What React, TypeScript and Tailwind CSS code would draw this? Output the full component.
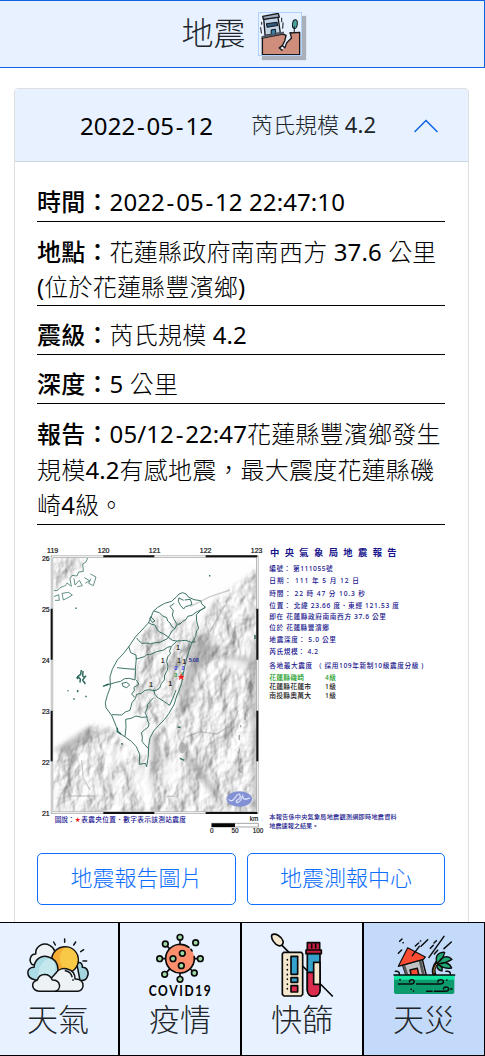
import type { ReactNode } from "react";

const Hy = () => <span className="px-[1.7px]">-</span>;

function Num({ children }: { children: ReactNode }) {
  return <span className="font-normal tracking-[0.1px]">{children}</span>;
}

function Row({ label, className, children }: { label: string; className: string; children: ReactNode }) {
  return (
    <div className={`border-b border-black whitespace-nowrap ${className}`}>
      <span className="font-medium">{label}：</span>
      {children}
    </div>
  );
}

function QuakeIcon() {
  return (
    <svg viewBox="28 25 124 124" className="size-full" stroke="#16181d" strokeWidth="4" strokeLinejoin="round" strokeLinecap="round" fill="none">
      <path d="M37 99 L98 87 L108 90 L104 107 L97 123 L88 136 L104 128 L109 114 L124 99 L120 83 L148 80 V148 H37Z" fill="#cf8d7b" stroke="none" />
      <path d="M37 99 L98 87 L108 91 L104 107 L97 121 L104 128 L110 113 L124 99 L120 83" fill="#e8f0fb" />
      <path d="M38 98 V148 H148 V82 L120 84 M97 121 L88 128 L96 135" />
      <path d="M46 91 L42 43 L84 37 L91 84Z" fill="#c3d3e6" />
      <path d="M39 35 L85 26 L88 37 L41 44Z" fill="#9fa9b8" />
      <path d="M50 57 L81 52 L83 62 L52 67Z" fill="#315b80" strokeWidth="3" />
      <path d="M64 88 V75 L76 73 L78 85" fill="#3a83a8" strokeWidth="3" />
      <path d="M38 96 L99 83" strokeWidth="6" stroke="#555b66" />
      <ellipse cx="134" cy="58" rx="7" ry="13" fill="#4ba49e" transform="rotate(8 134 58)" strokeWidth="3" />
      <path d="M132 65 V81 M33 68 L35 84 M95 40 V51 M99 54 L98 70 M36 52 V58" strokeWidth="3" />
    </svg>
  );
}

function WeatherIcon() {
  return (
    <svg viewBox="78 40 192 192" className="size-16" stroke="#101214" strokeWidth="4.5" strokeLinecap="round" strokeLinejoin="round">
      <path d="M194 58 V68 M161 67 L166 76 M227 67 L221 76 M251 90 L242 96 M249 124 H260" fill="none" />
      <path d="M97 135 C84 122 92 103 107 103 C106 79 130 67 149 77 C157 81 162 86 164 94 V130Z" fill="#edf3f4" />
      <path d="M230 130 C244 124 248 135 247 143 C262 142 269 160 261 173 C258 180 249 183 240 182Z" fill="#a4d5df" />
      <circle cx="195" cy="121" r="40" fill="#f6ad35" />
      <path d="M195 84 C168 106 180 143 204 158 C238 147 244 98 207 84Z" fill="#f8c947" stroke="none" />
      <path d="M104 180 C78 175 76 143 102 143 C104 118 125 104 146 112 C166 118 174 132 174 150 L168 181Z" fill="#acdce5" />
      <path d="M104 175 C124 172 106 150 131 126 C137 120 143 116 150 118 C174 130 165 151 160 170Z" fill="#c4e8ed" stroke="none" />
      <path d="M120 215 H234 C252 211 255 188 237 180 C231 177 226 178 225 178 C226 145 182 137 168 160 L154 175Z" fill="#edf3f4" />
      <path d="M118 215 C94 212 91 188 112 181 C119 160 147 158 157 181 C183 181 186 211 164 215Z" fill="#edf3f4" />
      <path d="M196 153 C207 155 214 161 216 171 M219 180 V182" fill="none" />
    </svg>
  );
}

const VIRUS_ARMS = [
  [540, 53], [496, 73], [587, 69], [479, 117], [601, 117], [494, 164], [583, 160], [540, 179],
];

function CovidIcon() {
  return (
    <svg viewBox="444 40 192 192" className="size-16 overflow-visible" strokeLinecap="round">
      <g stroke="#0b0b0b" strokeWidth="5">
        <path d="M540 53 V77 M496 73 L513 92 M479 117 H498 M582 117 H600 M494 164 L513 144 M583 160 L568 145 M540 160 V178" />
        <circle cx="540" cy="117" r="43" fill="#ff8e6d" strokeDasharray="236 8 6 22" transform="rotate(-8 540 117)" />
        {VIRUS_ARMS.map(([x, y]) => (
          <circle key={`${x}-${y}`} cx={x} cy={y} r="8.5" fill="#a2dba6" />
        ))}
        <circle cx="547" cy="101" r="8.5" fill="#a2dba6" />
        <circle cx="519" cy="117" r="8.5" fill="#a2dba6" />
        <circle cx="544" cy="138" r="8.5" fill="#a2dba6" />
      </g>
      <text transform="translate(446 229) scale(0.84 1)" x="0" y="0" textLength="222" fontSize="43" className="font-['Lato'] font-bold">COVID19</text>
    </svg>
  );
}

function TestIcon() {
  return (
    <svg viewBox="84 40 192 192" className="size-16" stroke="#090909" strokeWidth="5" strokeLinecap="round" strokeLinejoin="round">
      <path d="M120 77 L271 229" fill="none" />
      <path d="M90 45 C101 39 119 51 123 64 C125 73 119 80 110 78 C98 75 85 56 90 45Z" fill="#f5e8cf" />
      <path d="M125 98 H178 L182 103 V224 L177 229 H126 L121 224 V103Z" fill="#f5e8cf" />
      <rect x="147" y="110" width="20" height="54" fill="#36a3cf" />
      <rect x="147" y="174" width="20" height="14" fill="#36a3cf" />
      <rect x="147" y="198" width="20" height="19" fill="#dc2c50" />
      <path d="M136 120 V121 M136 135 V136 M136 150 V151 M136 164 V165 M136 178 V179 M136 193 V194 M136 207 V208" />
      <path d="M196 101 V212 C197 236 233 236 234 212 V101Z" fill="#36a3cf" />
      <path d="M196 158 H234 V212 C233 236 197 236 196 212Z" fill="#dc2c50" />
      <path d="M215 128 H234 V194 H215Z" fill="#f5e8cf" />
      <path d="M196 69 H233 V91 H196Z M192 91 H238 V102 H192Z" fill="#c92042" />
      <path d="M209 73 V85 M221 73 V85" />
    </svg>
  );
}

function DisasterIcon() {
  return (
    <svg viewBox="450 40 192 192" className="size-16" stroke="#0b0d0d" strokeWidth="4.5" strokeLinecap="round" strokeLinejoin="round">
      <path d="M473 65 L480 58 M483 69 H484 M469 101 L479 91 M557 60 L537 80 M530 70 L520 79 M535 64 H536 M606 50 L561 113 M583 63 L576 70 M574 77 L565 86 M587 92 L577 103 M628 67 L606 87" fill="none" />
      <path d="M482 136 L541 119 L553 167 H492Z" fill="#bfc1c3" />
      <path d="M486 138 L495 166 M534 122 L544 164" stroke="#555" strokeWidth="8" />
      <path d="M504 151 L526 146 L531 167 H508Z" fill="#f24b32" />
      <path d="M469 140 L497 84 L550 112 L544 119Z" fill="#fc4c34" strokeWidth="3.5" />
      <path d="M532 80 L511 108" />
      <path d="M577 166 C572 151 575 142 585 128" fill="none" strokeWidth="12" />
      <path d="M576 160 C574 149 578 142 585 132" fill="none" stroke="#b9894d" strokeWidth="3" />
      <path d="M585 130 C577 107 592 96 608 98 C605 111 597 123 587 129Z M588 130 C600 108 619 107 630 119 C615 128 603 132 589 132Z M590 133 C606 124 623 130 629 145 C614 148 599 142 590 135Z M587 135 C600 139 602 147 600 154 C587 151 583 143 586 136Z" fill="#20a875" strokeWidth="4" />
      <path d="M456 166 H637 V218 Q637 223 631 223 H462 Q456 223 456 218Z" fill="#0b9b6c" stroke="none" />
      <path d="M456 166 H637 V180 H456Z" fill="#12e6a2" stroke="none" />
      <path d="M456 166 H638 M460 155 C470 154 473 158 472 164 M612 155 C622 153 626 158 625 164 M469 193 H508 C520 192 519 179 508 180 C502 181 502 185 503 187 M524 193 H594 C608 193 607 179 595 180 C589 180 587 184 588 187 M577 215 H610 C623 214 623 201 611 202 C605 203 604 206 605 208 M554 215 H570 M473 180 H475 M614 181 H615 M507 209 H508 M514 214 H515 M626 208 H630" fill="none" />
    </svg>
  );
}

const REPORT: [string, number, number][] = [
  ["編號： 第111055號", 87, 190],
  ["日期： 111 年 5 月 12 日", 124, 269],
  ["時間： 22 時 47 分 10.3 秒", 161, 287],
  ["位置： 北緯 23.66 度．東經 121.53 度", 198, 389],
  ["即在 花蓮縣政府南南西方 37.6 公里", 230, 350],
  ["位於 花蓮縣豐濱鄉", 263, 179],
  ["地震深度： 5.0 公里", 300, 200],
  ["芮氏規模： 4.2", 337, 146],
  ["各地最大震度 （ 採用109年新制10級震度分級 )", 378, 462],
];

const STATIONS: [string, string, number, number, string][] = [
  ["花蓮縣磯崎", "4級", 414, 104, "#159a1b"],
  ["花蓮縣花蓮市", "1級", 441, 125, "#151515"],
  ["南投縣奧萬大", "1級", 468, 125, "#151515"],
];

const COAST =
  "M440 170 L447 162 458 158 468 162 475 171 492 179 512 182 516 193 526 201 512 211 499 224 500 245 506 265 499 274 497 290 484 312 478 330 468 362 460 400 455 430 447 452 440 468 433 492 417 520 404 538 385 557 371 573 360 594 356 618 355 648 350 680 346 670 328 673 329 643 319 620 304 604 287 592 266 578 259 560 246 528 228 503 226 488 232 466 241 441 240 410 247 388 262 360 280 341 298 318 316 291 336 270 355 249 362 236 369 215 383 202 404 190 425 184 Z";

const COUNTIES =
  "M447 173 L445 184 451 196 461 207 466 200 474 198 486 193 481 178 464 180 M447 174 L461 181 M433 190 L420 199 430 212 427 225 431 236 440 251 M526 203 L510 211 498 217 486 226 473 229 468 239 458 244 450 252 441 253 434 267 426 273 420 284 412 296 402 301 390 307 375 308 362 312 350 309 336 310 326 302 320 294 M371 213 L388 218 398 228 410 233 413 243 420 249 426 260 435 267 M355 247 L365 253 375 255 380 267 388 276 400 281 413 290 427 301 440 303 455 302 468 301 483 307 497 305 M296 319 L302 338 318 345 319 357 343 350 350 344 362 343 380 335 401 330 412 322 424 319 441 303 M319 355 L316 388 288 386 261 383 M317 388 L315 420 298 415 284 416 272 424 258 427 239 433 M424 320 L419 332 421 341 413 351 410 365 414 378 412 391 404 405 403 420 394 431 389 444 380 450 371 452 358 449 345 451 334 460 320 463 316 476 306 488 303 500 300 511 286 516 275 525 246 524 M225 437 L241 432 M371 449 L375 463 382 472 400 483 419 496 428 476 438 450 M371 473 L361 484 353 493 351 507 345 519 351 530 352 540 357 551 355 561 343 570 334 578 337 591 336 604 344 614 354 625 M352 531 L335 532 318 528 303 535 287 538 288 562 285 590 M319 420 L327 433 312 442 313 452 305 462 314 472";

const RELIEF =
  "M66 50 H155 L157 90 90 128 66 168Z M66 640 L120 610 185 554 246 568 285 610 320 646 358 650 362 590 408 548 440 490 461 410 480 330 500 290 520 235 560 178 620 135 680 88 V820 H66Z M320 292 L360 250 385 225 430 240 500 240 497 300 462 405 440 460 400 535 358 570 330 590 352 530 310 520 318 355Z";

function QuakeMap() {
  return (
    <svg viewBox="37 540 408 300" className="mt-[15px] h-[300px] w-full">
      <defs>
        <filter id="terrain" x="0" y="0" width="100%" height="100%" colorInterpolationFilters="sRGB">
          <feTurbulence type="fractalNoise" baseFrequency="0.017 0.012" numOctaves="4" seed="7" />
          <feDiffuseLighting surfaceScale="12" diffuseConstant="1.02" lightingColor="#fff">
            <feDistantLight azimuth="205" elevation="60" />
          </feDiffuseLighting>
        </filter>
        <filter id="soft" x="-20%" y="-20%" width="140%" height="140%">
          <feGaussianBlur stdDeviation="8" />
        </filter>
        <clipPath id="frame">
          <rect x="66" y="50" width="616" height="768" />
        </clipPath>
        <mask id="ground" maskUnits="userSpaceOnUse" x="66" y="50" width="616" height="770">
          <path d={RELIEF} fill="#d8d8d8" filter="url(#soft)" />
        </mask>
      </defs>

      <g transform="translate(30 540) scale(0.33333)">
        <g clipPath="url(#frame)">
          <rect x="66" y="50" width="616" height="768" fill="#fefefe" />
          <g mask="url(#ground)">
            <rect x="66" y="50" width="616" height="768" filter="url(#terrain)" />
          </g>
          <g filter="url(#soft)" fill="#666" opacity="0.4">
            <path d="M480 350 L500 290 545 275 535 310 580 325 560 345 500 400 478 470 440 530 455 440Z" />
            <path d="M664 300 H682 V820 H668Z M545 345 L650 350 682 380 682 400 600 365Z" />
            <path d="M365 575 L388 590 382 680 362 770Z M72 630 L180 560 200 575 110 645Z M455 610 L520 690 580 780 560 780 480 680Z" />
          </g>
          <g filter="url(#soft)" fill="#fff" opacity="0.75">
            <path d="M570 355 L650 360 655 390 590 385Z M410 560 L430 560 440 620 420 640Z M400 650 L450 660 440 720 400 740Z M320 660 L355 690 350 780 300 740Z M245 620 L290 630 270 680 235 660Z" />
          </g>
          <path d="M470 590 L510 575 560 582 610 552 625 510 M120 768 H195 M155 660 L160 715 180 750 M540 275 L585 195 M410 770 L433 768 M480 200 L540 170 600 150" fill="none" stroke="#888" strokeWidth="4" opacity="0.4" />
          <ellipse cx="457" cy="623" rx="11" ry="17" fill="#999" opacity="0.6" />
          <path d="M628 585 V600 M630 625 L625 640 M632 655 V668 M628 690 L634 698 M645 520 V540 M632 555 V562" stroke="#777" strokeWidth="4" opacity="0.6" />
        </g>
        <g fill="none" stroke="#2f6b5f" strokeWidth="2.8" strokeLinejoin="round">
          <path d={COAST} />
          <path d={COUNTIES} />
          <path d="M173 54 L168 66 158 72 160 94 146 96 141 108 126 106 120 116 124 139 111 129 106 137 90 143 83 151 72 152 M132 115 L135 135 148 121 157 137 142 140 M163 113 L179 122 166 130 M181 102 L198 111 190 137 176 130 183 116 M72 170 L86 164 88 181 75 181 M96 160 L116 157 127 165 114 173 100 180 Z" strokeWidth="2.2" />
          <path d="M276 430 L290 427 299 435 290 443 279 439Z M362 230 L375 243 367 247 359 237Z" />
          <path d="M154 390 L152 403 143 410 151 417 150 428 M159 393 L158 408 164 412 158 420 166 432 M168 407 L162 414 M144 417 L140 411" strokeWidth="4.5" />
          <path d="M143 450 V457 M132 475 V479 M168 467 V472 M114 451 V454 M262 563 V575 L273 582 M276 609 V614 M219 439 L236 432 M675 285 V297 M537 107 H541 M136 205 H140 M443 562 H452 M450 655 L463 661" strokeWidth="4.5" />
        </g>
        <path d="M66 50 H682 V818 H66Z" fill="none" stroke="#9b9b9b" strokeWidth="7" />
        <path d="M66 50 H682 V818 H66Z" fill="none" stroke="#fff" strokeWidth="3" />
        <path d="M220 49 H373 M527 49 H682 M65 206 V359 M65 512 V664 M682 206 V359 M682 512 V664 M220 819 H373 M527 819 H682" stroke="#111" strokeWidth="6" />
        <g className="font-['Liberation_Sans'] font-normal" fontSize="21" fill="#111" stroke="#111" strokeWidth="0.6">
          {[119, 120, 121, 122, 123].map((n, i) => (
            <text key={n} x={68 + i * 153} y="39" textAnchor="middle">{n}</text>
          ))}
          {[26, 25, 24, 23, 22, 21].map((n, i) => (
            <text key={n} x="59" y={62 + i * 153} textAnchor="end">{n}</text>
          ))}
        </g>
        <g className="font-['Liberation_Sans'] font-bold" fontSize="19" textAnchor="middle" fill="#302820">
          <text x="444" y="331">1</text>
          <text x="398" y="370">1</text>
          <text x="447" y="370">1</text>
          <text x="463" y="371">1</text>
          <text x="421" y="439">1</text>
          <text x="363" y="441">1</text>
          <text x="438" y="391" fontSize="17" fill="#2f35f5">2</text>
          <text x="459" y="390" fontSize="14" fill="#2f35f5">2</text>
          <text x="437" y="412" fontSize="16" fill="#2aa33a">3</text>
          <text x="456" y="404" fontSize="11" fill="#178838">4</text>
          <text x="491" y="367" fontSize="16" textLength="30" fill="#242a92">5.08</text>
        </g>
        <path d="M453 402 L456 408 462 408 458 413 460 419 453 415 447 419 449 412 445 408 451 408Z" fill="#f01818" stroke="#f01818" />
        <ellipse cx="628" cy="777" rx="38" ry="23" fill="#8391d4" />
        <path d="M596 778 C607 790 614 774 620 767 C629 754 637 772 623 779 C613 785 623 794 632 780 L638 768 C640 782 647 778 659 774" fill="none" stroke="#d9dff8" strokeWidth="4" />
        <g className="font-['DejaVu_Sans','Noto_Sans_CJK_TC',sans-serif] font-medium" fontSize="20" fill="#19148f">
          <text x="74" y="845" textLength="60">圖說：</text>
          <text x="134" y="845" fill="#f21818" textLength="19">★</text>
          <text x="154" y="845" textLength="314">表震央位置．數字表示該測站震度</text>
        </g>
        <path d="M545 850 H685 V861 H545Z" fill="#fff" stroke="#777" strokeWidth="2" />
        <path d="M545 850 H615 V861 H545Z" fill="#050505" />
        <g className="font-['Liberation_Sans'] font-normal" fontSize="19" fill="#111" stroke="#111" strokeWidth="0.5" textAnchor="middle">
          <text x="672" y="843">km</text>
          <text x="545" y="880">0</text>
          <text x="615" y="880">50</text>
          <text x="684" y="880">100</text>
        </g>
      </g>

      <g transform="translate(260 540) scale(0.33333)" className="font-['Noto_Sans','Noto_Sans_CJK_TC',sans-serif] font-medium" fill="#17138b">
        <text x="30" y="47" fontSize="28" fontWeight="700" textLength="380">中 央 氣 象 局 地 震 報 告</text>
        {REPORT.map(([t, y, w]) => (
          <text key={y} x="28" y={y + 6} fontSize="20" textLength={w}>{t}</text>
        ))}
        {STATIONS.map(([name, level, y, w, color]) => (
          <g key={y} fill={color}>
            <text x="28" y={y + 6} fontSize="20.5" textLength={w}>{name}</text>
            <text x="195" y={y + 6} fontSize="20" textLength="33">{level}</text>
          </g>
        ))}
        <text x="28" y="838" fontSize="18.5" textLength="382">本報告係中央氣象局地震觀測網即時地震資料</text>
        <text x="28" y="863" fontSize="18.5" textLength="147">地震速報之結果。</text>
      </g>
    </svg>
  );
}

const TABS = [
  { label: "天氣", icon: <WeatherIcon />, bg: "bg-[#e7f1ff]" },
  { label: "疫情", icon: <CovidIcon />, bg: "bg-[#e7f1ff]" },
  { label: "快篩", icon: <TestIcon />, bg: "bg-[#e7f1ff]" },
  { label: "天災", icon: <DisasterIcon />, bg: "bg-[#c3dafb]" },
];

export default function App() {
  return (
    <div lang="zh-Hant" className="flex h-[1056px] w-[485px] flex-col overflow-hidden bg-white font-['Noto_Sans','Noto_Sans_CJK_TC',sans-serif] font-light text-black">
      <header className="flex h-[68px] shrink-0 items-center justify-center gap-3 border border-l-0 border-[#0c63e4] bg-[#e7f1ff] pr-px">
        <h1 className="pb-0.5 text-[32px] leading-none text-[#212529]">地震</h1>
        <div className="size-11 border border-[#b0d0ff] shadow-[4px_4px_1px_#a9b0ba]">
          <QuakeIcon />
        </div>
      </header>

      <main className="min-h-0 flex-1 overflow-hidden px-3.5 pt-5">
        <section className="h-[900px] w-[454.5px] rounded border border-[#dfdfdf]">
          <button className="flex h-[73px] w-full items-center rounded-t-[3px] bg-[#e7f1ff] pl-[65px] shadow-[inset_0_-1px_0_#ccd5e2]">
            <span className="text-2xl"><Num>2022<Hy />05<Hy />12</Num></span>
            <span className="ml-[38px] pb-0.5 text-[22px] text-[#212529]">芮氏規模<Num> 4.2</Num></span>
            <svg viewBox="0 0 24 14" className="ml-[38px] h-3.5 w-6" fill="none" stroke="#0c63e4" strokeWidth="1.5" strokeLinecap="round">
              <path d="M1 12.5 L12 1.5 L23 12.5" />
            </svg>
          </button>

          <div className="w-[452px] pr-[22px] pl-[22px]">
            <div className="flex flex-col gap-3 pt-[23px] text-2xl leading-[34px] tracking-[0.2px]">
              <Row label="時間" className="h-[37px]"><Num>2022<Hy />05<Hy />12 22:47:10</Num></Row>
              <Row label="地點" className="h-[72px] leading-[35px]">花蓮縣政府南南西方<Num> 37.6 </Num>公里<br /><Num>(</Num>位於花蓮縣豐濱鄉<Num>)</Num></Row>
              <Row label="震級" className="h-[37px]">芮氏規模<Num> 4.2</Num></Row>
              <Row label="深度" className="h-[37px]"><Num>5 </Num>公里</Row>
              <Row label="報告" className="h-[109px] leading-[35.5px]"><Num>05/12<Hy />22:47</Num>花蓮縣豐濱鄉發生<br />規模<Num>4.2</Num>有感地震，最大震度花蓮縣磯<br />崎<Num>4</Num>級。</Row>
            </div>
            <QuakeMap />
            <div className="mt-[13px] flex gap-[11px] text-[22px] text-[#0d6efd]">
              <button className="h-[52px] w-[199px] rounded-[5px] border border-[#0d6efd] pb-1">地震報告圖片</button>
              <button className="h-[52px] w-[198px] rounded-[5px] border border-[#0d6efd] pb-1">地震測報中心</button>
            </div>
          </div>
        </section>
      </main>

      <nav className="flex h-[134px] shrink-0 justify-end overflow-hidden">
        {TABS.map((t) => (
          <a key={t.label} className={`flex w-[122px] shrink-0 flex-col items-center border border-black pt-[10px] text-[#212529] ${t.bg}`}>
            {t.icon}
            <span className="mt-[5px] text-[31px] leading-[34px]">{t.label}</span>
          </a>
        ))}
      </nav>
    </div>
  );
}
